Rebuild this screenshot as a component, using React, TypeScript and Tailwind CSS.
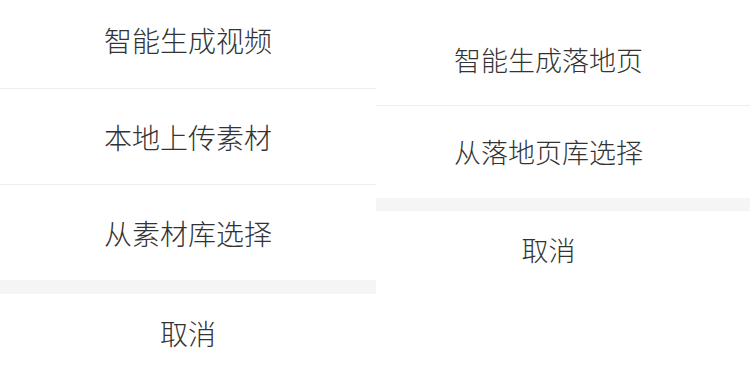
const font = { fontFamily: '"Noto Sans CJK SC", "Noto Sans", sans-serif' };

function Row({ label, className }: { label: string; className: string }) {
  return <div className={`flex items-center justify-center ${className}`}>{label}</div>;
}

export default function App() {
  return (
    <div className="flex w-[750px] h-[375px] overflow-hidden bg-white font-light text-[#333333]" style={font}>
      {/* left sheet: video */}
      <div className="flex flex-col w-[376px] text-[28px]">
        <Row label="智能生成视频" className="h-[88px] pb-2" />
        <Row label="本地上传素材" className="h-[96px] border-t border-[#eeeeee]" />
        <Row label="从素材库选择" className="h-[96px] border-t border-[#eeeeee]" />
        <div className="h-[14px] bg-[#f5f5f5]" />
        <Row label="取消" className="h-[78px]" />
      </div>

      {/* right sheet: landing page */}
      <div className="flex flex-col flex-1 text-[27px]">
        <Row label="智能生成落地页" className="h-[105px] pt-[15px] pr-[29px]" />
        <Row label="从落地页库选择" className="h-[93px] border-t border-[#eeeeee] pr-[29px]" />
        <div className="h-[13px] bg-[#f5f5f5]" />
        <Row label="取消" className="h-[78px] pr-[29px]" />
      </div>
    </div>
  );
}
